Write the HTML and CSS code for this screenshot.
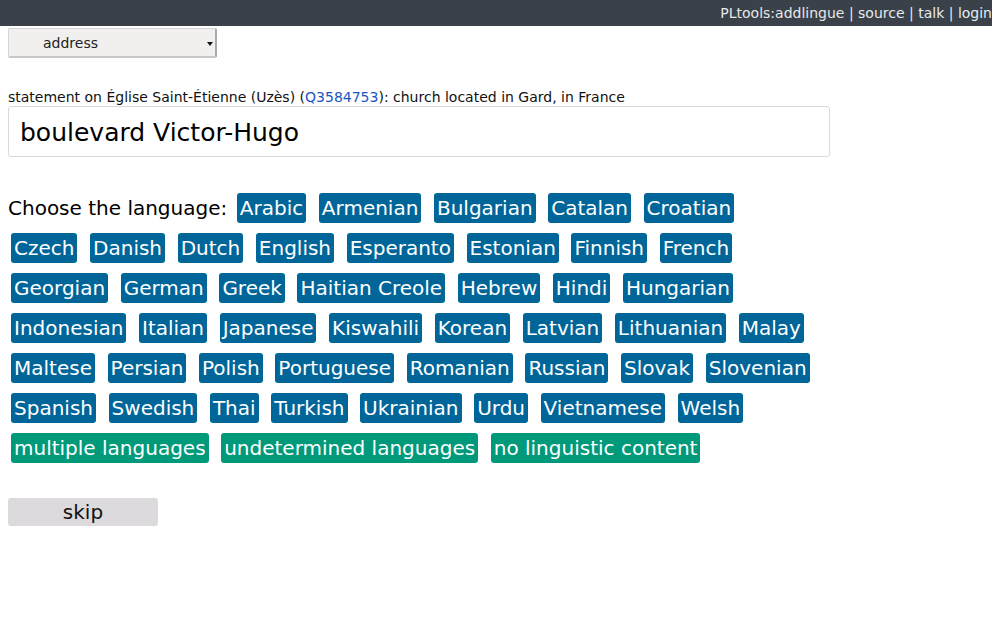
FILE: index.html
```html
<!DOCTYPE html>
<html>
<head>
<meta charset="utf-8">
<title>addlingue</title>
<link rel="stylesheet" href="styles.css">
</head>
<body>
<header class="topbar">
  <span class="tool">PLtools:addlingue</span> | <a href="#">source</a> | <a href="#">talk</a> | <a href="#">login</a>
</header>
<main class="page">
  <div class="select-wrap">
    <select class="prop-select"><option>address</option></select>
    <span class="select-arrow"></span>
  </div>
  <p class="statement">statement on Église Saint-Étienne (Uzès) (<a href="#">Q3584753</a>): church located in Gard, in France</p>
  <div class="value-box">boulevard Victor-Hugo</div>
  <div class="langs">
    <span class="label">Choose the language:</span>
    <button class="lang">Arabic</button>
    <button class="lang">Armenian</button>
    <button class="lang">Bulgarian</button>
    <button class="lang">Catalan</button>
    <button class="lang">Croatian</button>
    <button class="lang">Czech</button>
    <button class="lang">Danish</button>
    <button class="lang">Dutch</button>
    <button class="lang">English</button>
    <button class="lang">Esperanto</button>
    <button class="lang">Estonian</button>
    <button class="lang">Finnish</button>
    <button class="lang">French</button>
    <button class="lang">Georgian</button>
    <button class="lang">German</button>
    <button class="lang">Greek</button>
    <button class="lang">Haitian Creole</button>
    <button class="lang">Hebrew</button>
    <button class="lang">Hindi</button>
    <button class="lang">Hungarian</button>
    <button class="lang">Indonesian</button>
    <button class="lang">Italian</button>
    <button class="lang">Japanese</button>
    <button class="lang">Kiswahili</button>
    <button class="lang">Korean</button>
    <button class="lang">Latvian</button>
    <button class="lang">Lithuanian</button>
    <button class="lang">Malay</button>
    <button class="lang">Maltese</button>
    <button class="lang">Persian</button>
    <button class="lang">Polish</button>
    <button class="lang">Portuguese</button>
    <button class="lang">Romanian</button>
    <button class="lang">Russian</button>
    <button class="lang">Slovak</button>
    <button class="lang">Slovenian</button>
    <button class="lang">Spanish</button>
    <button class="lang">Swedish</button>
    <button class="lang">Thai</button>
    <button class="lang">Turkish</button>
    <button class="lang">Ukrainian</button>
    <button class="lang">Urdu</button>
    <button class="lang">Vietnamese</button>
    <button class="lang">Welsh</button>
    <button class="lang special">multiple languages</button>
    <button class="lang special">undetermined languages</button>
    <button class="lang special">no linguistic content</button>
  </div>
  <button class="skip">skip</button>
</main>
</body>
</html>
```

FILE: styles.css
```css
html, body {
  margin: 0;
  padding: 0;
  background: #fff;
  font-family: "DejaVu Sans", sans-serif;
  color: #000;
}

.topbar {
  height: 26px;
  line-height: 26px;
  background: #3a4148;
  color: #e8e8e8;
  font-size: 14px;
  text-align: right;
  white-space: nowrap;
}

.topbar a {
  color: #e4ecf4;
  text-decoration: none;
}

.page {
  padding: 0 8px;
}

.select-wrap {
  position: relative;
  width: 209px;
  height: 30px;
  margin-top: 2px;
}

.prop-select {
  appearance: none;
  -webkit-appearance: none;
  width: 209px;
  height: 30px;
  margin: 0;
  padding: 0 0 0 34px;
  font-family: "DejaVu Sans", sans-serif;
  font-size: 14px;
  color: #222;
  background: #f1f0ef;
  border: 1px solid #d6d6d6;
  border-right: 2px solid #a8a8a8;
  border-bottom: 2px solid #c8c8c8;
  border-radius: 2px;
}

.select-arrow {
  position: absolute;
  right: 4px;
  top: 14px;
  width: 0;
  height: 0;
  border-left: 3px solid transparent;
  border-right: 3px solid transparent;
  border-top: 4px solid #111;
}

.statement {
  margin: 31px 0 0;
  font-size: 14px;
  line-height: 16px;
  color: #111;
}

.statement a {
  color: #1a55c4;
  text-decoration: none;
}

.value-box {
  box-sizing: border-box;
  width: 822px;
  height: 51px;
  margin-top: 1px;
  padding: 0 11px;
  border: 1px solid #d9d9d9;
  border-radius: 3px;
  font-size: 25px;
  line-height: 51px;
  color: #000;
}

.langs {
  display: flex;
  flex-wrap: wrap;
  align-items: center;
  column-gap: 6.6px;
  row-gap: 10px;
  margin-top: 36px;
  width: 805px;
}

.label {
  font-size: 20px;
  line-height: 30px;
}

.lang {
  height: 30px;
  margin: 0 3px;
  padding: 0 3px;
  border: none;
  border-radius: 3px;
  background: #006699;
  color: #fff;
  font-family: "DejaVu Sans", sans-serif;
  font-size: 20px;
  line-height: 30px;
  cursor: pointer;
}

.lang.special {
  background: #009a7b;
}

.skip {
  display: block;
  width: 150px;
  height: 28px;
  margin-top: 35px;
  padding: 0;
  border: none;
  border-radius: 3px;
  background: #dcdadd;
  color: #111;
  font-family: "DejaVu Sans", sans-serif;
  font-size: 20px;
  line-height: 28px;
}
```
